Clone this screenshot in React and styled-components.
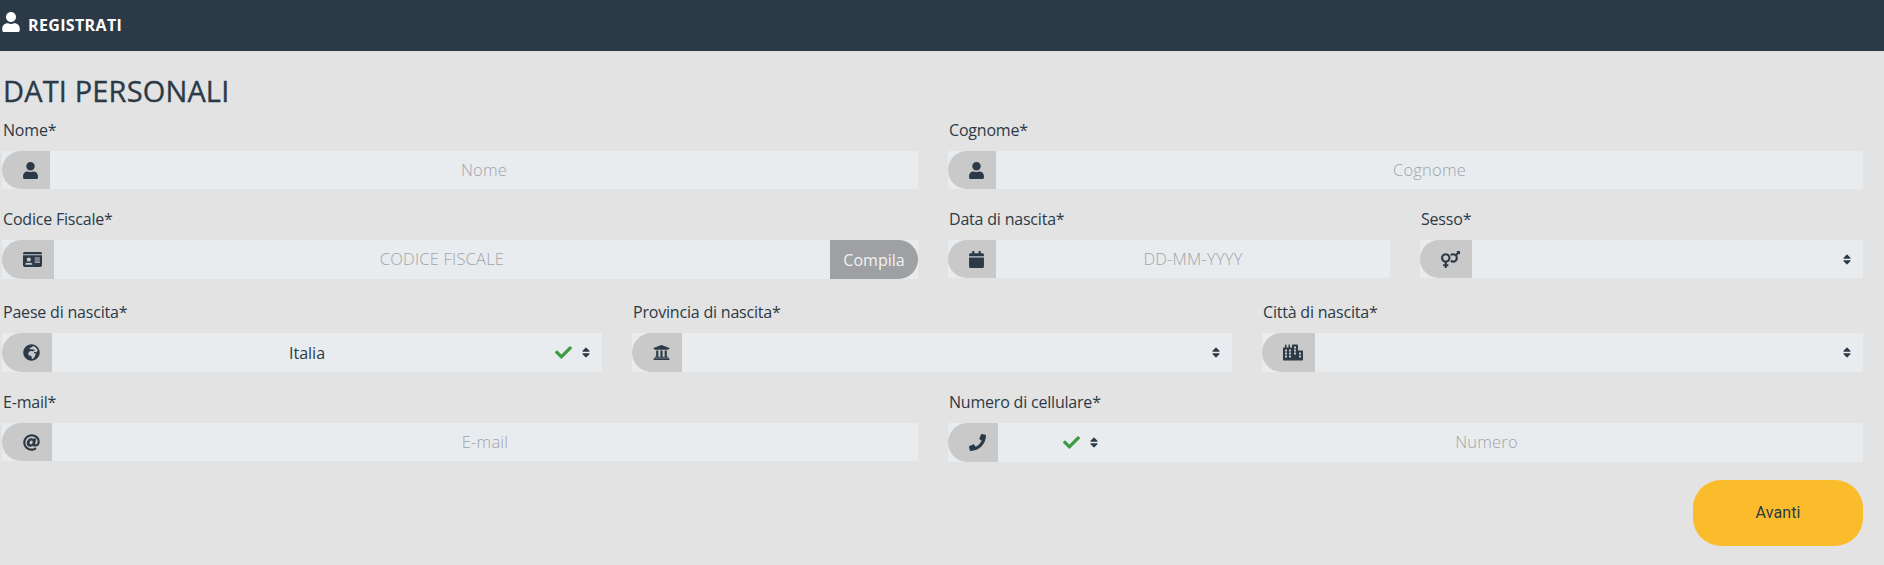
import React from 'react';
import styled, { createGlobalStyle } from 'styled-components';
import {
  FaUser,
  FaIdCard,
  FaCalendar,
  FaVenusMars,
  FaGlobeAfrica,
  FaUniversity,
  FaCity,
  FaAt,
  FaPhone,
  FaCheck,
  FaSort,
} from 'react-icons/fa';

const colors = {
  dark: '#2c3a47',
  page: '#e3e3e3',
  addon: '#c9c9c9',
  input: '#e9ecef',
  placeholder: '#a0a4a8',
  green: '#3f9a45',
  yellow: '#fbbc2c',
  compila: '#9fa0a4',
};

const GlobalStyle = createGlobalStyle`
  html, body {
    margin: 0;
    padding: 0;
    background: ${colors.page};
    color: ${colors.dark};
    font-family: "Open Sans", "Noto Sans", sans-serif;
  }
  * { box-sizing: border-box; }
`;

const Header = styled.header`
  height: 51px;
  background: ${colors.dark};
  color: #fff;
  display: flex;
  align-items: center;
  gap: 8px;
  padding: 0 0 1px 2px;
`;

const HeaderIcon = styled(FaUser)`
  width: 18px;
  height: 20px;
  margin-top: -6px;
`;

const HeaderTitle = styled.span`
  font-size: 16px;
  font-weight: 700;
  letter-spacing: 0.35px;
`;

const Main = styled.main`
  padding: 21px 21px 20px 2px;
`;

const Title = styled.h2`
  margin: 0 0 8px 1px;
  font-size: 29px;
  line-height: 38px;
  font-weight: 500;
  letter-spacing: 0.15px;
  -webkit-text-stroke: 0.35px ${colors.dark};
`;

const Row = styled.div`
  display: grid;
  grid-template-columns: ${(p) => p.$columns};
  column-gap: 30px;
  margin-bottom: ${(p) => p.$bottom}px;
`;

const Group = styled.div`
  min-width: 0;
`;

const Label = styled.label`
  display: block;
  margin: 0 0 9px 1px;
  font-size: 16px;
  line-height: 24px;
  letter-spacing: -0.2px;
`;

const Field = styled.div`
  position: relative;
  display: flex;
  height: ${(p) => p.$height}px;
  background: ${colors.input};
`;

const Addon = styled.span`
  flex: none;
  display: flex;
  align-items: center;
  padding: 0 12px 0 21px;
  background: ${colors.addon};
  border-radius: 20px 0 0 20px;

  svg {
    width: ${(p) => p.$iconWidth || 17}px;
    height: 17px;
  }
`;

const Input = styled.input`
  flex: 1;
  min-width: 0;
  border: 0;
  outline: 0;
  padding: 0 12px 2px;
  background: transparent;
  text-align: center;
  color: ${colors.dark};
  font-family: "Open Sans", sans-serif;
  font-size: 16.5px;
  font-weight: 300;
  letter-spacing: 0.2px;
  &::placeholder {
    color: ${colors.placeholder};
    opacity: 1;
  }
`;

const Select = styled.select`
  flex: ${(p) => (p.$narrow ? '0 0 112px' : '1')};
  min-width: 0;
  border: 0;
  outline: 0;
  padding: 0 ${(p) => (p.$narrow ? 12 : 40)}px 0 0;
  background: transparent;
  appearance: none;
  text-align-last: center;
  color: ${colors.dark};
  font-family: inherit;
  font-size: 16px;
`;

const SelectMarks = styled.span`
  position: absolute;
  top: 0;
  bottom: 0;
  left: ${(p) => (p.$left ? `${p.$left}px` : 'auto')};
  right: ${(p) => (p.$left ? 'auto' : '12px')};
  display: flex;
  align-items: center;
  gap: 10px;
  pointer-events: none;
`;

const Check = styled(FaCheck)`
  color: ${colors.green};
  font-size: 17px;
`;

const Sort = styled(FaSort)`
  width: 8px;
  height: 13px;
`;

const Compila = styled.button`
  flex: none;
  width: 88px;
  border: 0;
  padding: 0;
  background: ${colors.compila};
  border-radius: 0 20px 20px 0;
  color: #f1f1f1;
  font-family: inherit;
  font-size: 16px;
`;

const Actions = styled.div`
  display: flex;
  justify-content: flex-end;
`;

const NextButton = styled.button`
  width: 170px;
  height: 66px;
  border: 0;
  padding: 0 0 2px;
  border-radius: 28px;
  background: ${colors.yellow};
  color: ${colors.dark};
  font-family: Roboto, sans-serif;
  font-size: 16px;
  letter-spacing: 0.1px;
`;

const SelectField = ({ icon, iconWidth, height, value, valid }) => (
  <Field $height={height}>
    <Addon $iconWidth={iconWidth}>{icon}</Addon>
    <Select defaultValue={value}>
      <option value={value}>{value}</option>
    </Select>
    <SelectMarks>
      {valid && <Check />}
      <Sort />
    </SelectMarks>
  </Field>
);

const App = () => (
  <>
    <GlobalStyle />
    <Header>
      <HeaderIcon />
      <HeaderTitle>REGISTRATI</HeaderTitle>
    </Header>
    <Main>
      <Title>DATI PERSONALI</Title>

      <Row $columns="916px 915px" $bottom={18}>
        <Group>
          <Label>Nome*</Label>
          <Field $height={38}>
            <Addon $iconWidth={15}><FaUser /></Addon>
            <Input placeholder="Nome" />
          </Field>
        </Group>
        <Group>
          <Label>Cognome*</Label>
          <Field $height={38}>
            <Addon $iconWidth={15}><FaUser /></Addon>
            <Input placeholder="Cognome" />
          </Field>
        </Group>
      </Row>

      <Row $columns="916px 442px 443px" $bottom={21}>
        <Group>
          <Label>Codice Fiscale*</Label>
          <Field $height={39}>
            <Addon $iconWidth={19}><FaIdCard /></Addon>
            <Input placeholder="CODICE FISCALE" />
            <Compila type="button">Compila</Compila>
          </Field>
        </Group>
        <Group>
          <Label>Data di nascita*</Label>
          <Field $height={38}>
            <Addon $iconWidth={15}><FaCalendar /></Addon>
            <Input placeholder="DD-MM-YYYY" />
          </Field>
        </Group>
        <Group>
          <Label>Sesso*</Label>
          <SelectField icon={<FaVenusMars />} iconWidth={19} height={38} value="" />
        </Group>
      </Row>

      <Row $columns="600px 600px 601px" $bottom={18}>
        <Group>
          <Label>Paese di nascita*</Label>
          <SelectField icon={<FaGlobeAfrica />} height={39} value="Italia" valid />
        </Group>
        <Group>
          <Label>Provincia di nascita*</Label>
          <SelectField icon={<FaUniversity />} height={39} value="" />
        </Group>
        <Group>
          <Label>Città di nascita*</Label>
          <SelectField icon={<FaCity />} iconWidth={20} height={39} value="" />
        </Group>
      </Row>

      <Row $columns="916px 915px" $bottom={18}>
        <Group>
          <Label>E-mail*</Label>
          <Field $height={38}>
            <Addon><FaAt /></Addon>
            <Input placeholder="E-mail" />
          </Field>
        </Group>
        <Group>
          <Label>Numero di cellulare*</Label>
          <Field $height={39}>
            <Addon><FaPhone /></Addon>
            <Select $narrow defaultValue="">
              <option value="" />
            </Select>
            <SelectMarks $left={115}>
              <Check />
              <Sort />
            </SelectMarks>
            <Input placeholder="Numero" />
          </Field>
        </Group>
      </Row>

      <Actions>
        <NextButton type="button">Avanti</NextButton>
      </Actions>
    </Main>
  </>
);

export default App;
